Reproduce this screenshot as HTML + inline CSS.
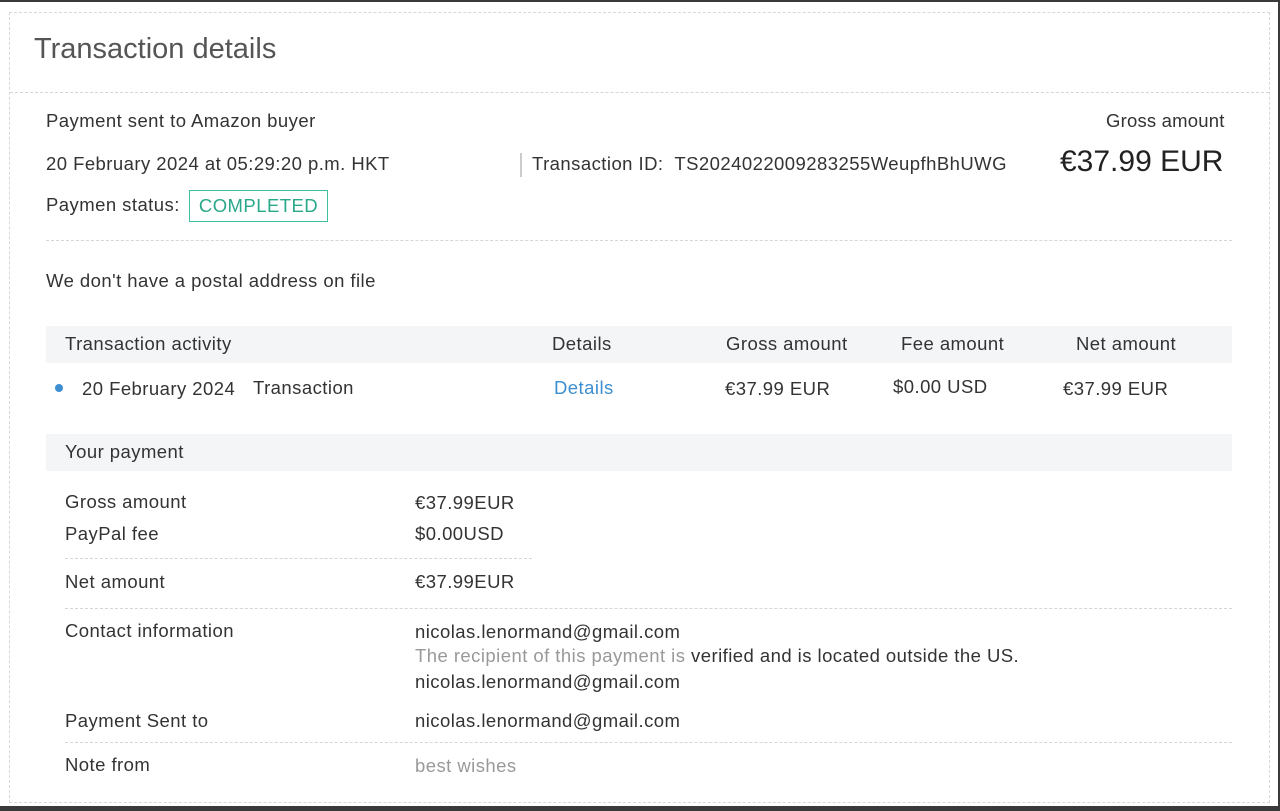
<!DOCTYPE html>
<html><head><meta charset="utf-8"><style>
*{margin:0;padding:0;box-sizing:border-box}
html,body{width:1280px;height:811px;overflow:hidden;background:#fff}
body{font-family:"Liberation Sans",sans-serif;color:#333;font-size:18.5px;letter-spacing:0.45px;position:relative;border-top:2px solid #3a3a3a;border-right:2px solid #3a3a3a}
.t{position:absolute;white-space:nowrap;line-height:1}
.box{position:absolute;left:9px;top:10px;width:1261px;height:791px;border:1px dashed #d8d8d8}
.hl{position:absolute;border-top:1px dashed #d6d6d6;height:0}
.bar{position:absolute;background:#f4f5f7}
.g{color:#999}
.b{color:#3d8fd1}
</style></head><body>
<div class="box"></div>
<div class="hl" style="left:10px;top:90px;width:1259px"></div>
<div class="t" style="left:34px;top:33px;font-size:29px;color:#555;letter-spacing:0">Transaction details</div>
<div class="t" style="left:46px;top:110px">Payment sent to Amazon buyer</div>
<div class="t" style="left:46px;top:153px">20 February 2024 at 05:29:20 p.m. HKT</div>
<div style="position:absolute;left:520px;top:151px;width:2px;height:24px;background:#ccc"></div>
<div class="t" style="left:532px;top:153px">Transaction ID:&nbsp; TS2024022009283255WeupfhBhUWG</div>
<div class="t" style="left:1106px;top:110px;letter-spacing:0.2px">Gross amount</div>
<div class="t" style="left:1060px;top:145px;font-size:30px;color:#222;letter-spacing:0">€37.99 EUR</div>
<div class="t" style="left:46px;top:194px">Paymen status:</div>
<div style="position:absolute;left:189px;top:188px;width:139px;height:32px;border:1px solid #3fbf9f;color:#2aa88a;line-height:30px;text-align:center">COMPLETED</div>
<div class="hl" style="left:46px;top:238px;width:1186px"></div>
<div class="t" style="left:46px;top:270px">We don't have a postal address on file</div>
<div class="bar" style="left:46px;top:324px;width:1186px;height:37px"></div>
<div class="t" style="left:65px;top:333px">Transaction activity</div>
<div class="t" style="left:552px;top:333px">Details</div>
<div class="t" style="left:726px;top:333px">Gross amount</div>
<div class="t" style="left:901px;top:333px">Fee amount</div>
<div class="t" style="left:1076px;top:333px">Net amount</div>
<div style="position:absolute;left:55px;top:382px;width:8px;height:8px;border-radius:50%;background:#3d8fd1"></div>
<div class="t" style="left:82px;top:378px">20 February 2024</div>
<div class="t" style="left:253px;top:377px">Transaction</div>
<div class="t b" style="left:554px;top:377px">Details</div>
<div class="t" style="left:725px;top:378px">€37.99 EUR</div>
<div class="t" style="left:893px;top:376px">$0.00 USD</div>
<div class="t" style="left:1063px;top:378px">€37.99 EUR</div>
<div class="bar" style="left:46px;top:432px;width:1186px;height:37px"></div>
<div class="t" style="left:65px;top:441px">Your payment</div>
<div class="t" style="left:65px;top:491px">Gross amount</div>
<div class="t" style="left:415px;top:492px">€37.99EUR</div>
<div class="t" style="left:65px;top:523px">PayPal fee</div>
<div class="t" style="left:415px;top:523px">$0.00USD</div>
<div class="hl" style="left:65px;top:556px;width:467px"></div>
<div class="t" style="left:65px;top:571px">Net amount</div>
<div class="t" style="left:415px;top:571px">€37.99EUR</div>
<div class="hl" style="left:65px;top:606px;width:1167px"></div>
<div class="t" style="left:65px;top:620px">Contact information</div>
<div class="t" style="left:415px;top:621px">nicolas.lenormand@gmail.com</div>
<div class="t" style="left:415px;top:645px"><span class="g">The recipient of this payment is</span> verified and is located outside the US.</div>
<div class="t" style="left:415px;top:671px">nicolas.lenormand@gmail.com</div>
<div class="t" style="left:65px;top:710px">Payment Sent to</div>
<div class="t" style="left:415px;top:710px">nicolas.lenormand@gmail.com</div>
<div class="hl" style="left:65px;top:740px;width:1167px"></div>
<div class="t" style="left:65px;top:754px">Note from</div>
<div class="t g" style="left:415px;top:755px">best wishes</div>
<div style="position:absolute;left:0;top:804px;width:1280px;height:7px;background:#3a3a3a"></div>
</body></html>
